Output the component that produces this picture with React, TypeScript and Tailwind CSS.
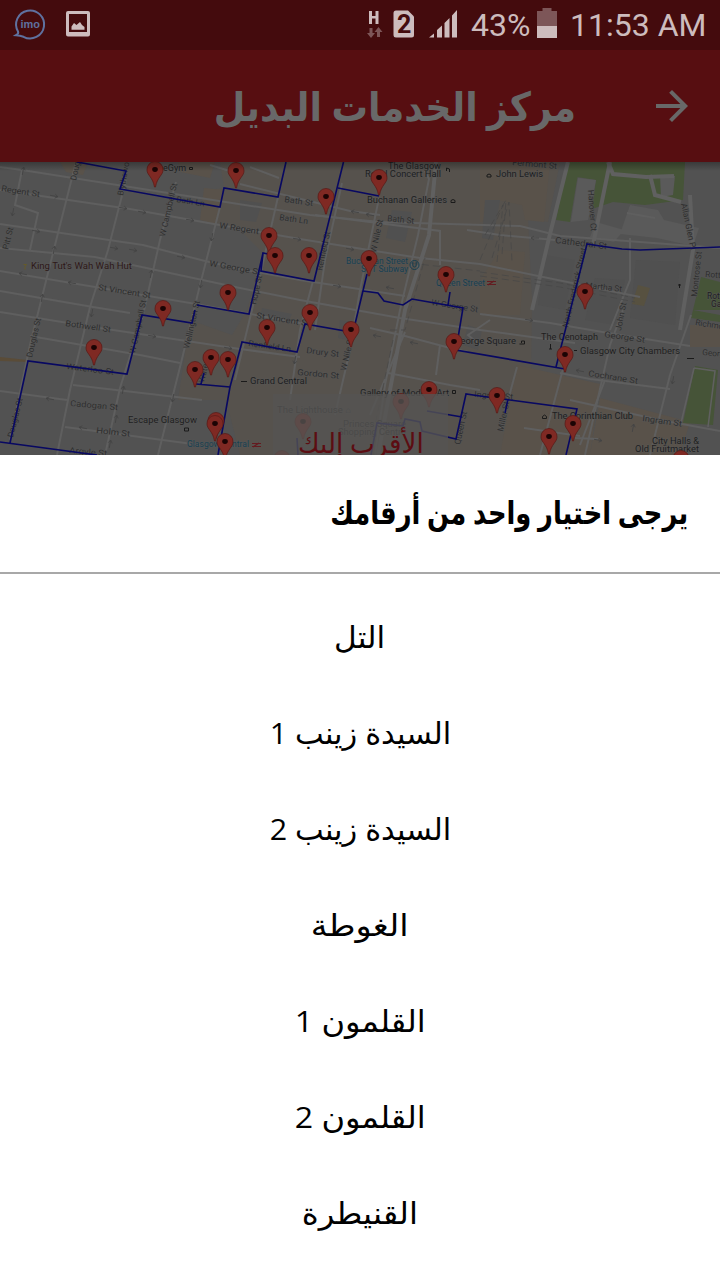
type Label = { t: string; x: number; y: number; r?: number; s?: number; c?: string; w?: number };

const options = [
  { label: 'التل', fit: 'scale-x-[1.04]' },
  { label: 'السيدة زينب 1', fit: 'scale-x-[1.015]' },
  { label: 'السيدة زينب 2', fit: 'scale-x-[1.015]' },
  { label: 'الغوطة', fit: 'scale-x-[1.12]' },
  { label: 'القلمون 1', fit: 'scale-x-[1.07]' },
  { label: 'القلمون 2', fit: 'scale-x-[1.07]' },
  { label: 'القنيطرة', fit: 'scale-x-[1.08]' },
];

const roads = [
  'M0 167L22 170L200 198L310 215L380 222L520 226L560 236L720 248',
  'M0 190L130 209L214 224L300 239L375 251L420 258L480 264L640 297',
  'M0 224L143 245L205 261L240 269L300 280L405 296',
  'M0 248L95 257L240 288L300 300L400 318L480 330L575 343',
  'M0 271L95 287L190 303L310 325',
  'M0 291L93 307L130 313',
  'M0 312L93 327L180 340L240 349L300 357',
  'M30 336L140 355L180 363',
  'M0 391L67 400M73 385L202 400M65 427L200 445',
  'M76 162L55 245L30 345L10 440M126 180L108 250L90 307L70 390L57 455',
  'M176 182L160 240L143 315L120 388L105 455',
  'M220 207L200 285L181 363L158 455M278 197L258 285L235 380',
  'M313 281L300 330L290 400M342 183L325 260L315 330M379 198L360 290L350 350L335 415',
  'M425 171L429 179L418 235L400 310L385 385L375 455',
  'M405 332L370 415M370 328L405 336L450 348L468 352M388 373L450 385L480 390',
  'M440 345L436 375M517 367L500 430M563 369L540 455',
  'M623 310L610 345L585 455M691 315L670 375L650 455',
  'M480 314L550 323L620 335L690 346M560 373L590 379L670 389',
  'M570 400L660 420L720 431M524 428L580 436M575 438L598 439',
  'M605 380L580 445M467 230L500 235L555 240',
  'M22 170L15 205L38 213L30 250M210 165L240 174M250 167L279 178',
  'M240 184L350 211L380 215M315 215L440 231L440 265',
  'M655 218L627 213M630 238L630 280L610 330M480 345L468 335L490 320',
];
const wideRoads = ['M568 162L549 238L532 310', 'M436 162L429 235L405 310L390 390L378 455', 'M608 162L613 174L646 177L674 176', 'M610 162L593 245', 'M690 195L693 250L680 330', 'M650 175L655 195L681 202'];
const arrows: Array<[number, number, number]> = [[54,196,10],[123,208,10],[142,212,10],[190,220,10],[36,231,10],[114,248,10],[133,250,10],[181,257,10],[23,274,190],[72,283,190],[355,212,190],[370,215,190],[337,286,10],[390,288,190],[297,239,10],[350,249,10],[535,238,180],[152,336,10],[228,348,10],[50,399,190],[83,428,190],[414,343,190],[377,336,190],[529,320,10],[580,371,190],[598,440,10],[23,171,280],[13,212,100],[54,250,280],[42,298,280],[151,274,280],[212,237,100],[201,284,100],[92,313,100],[123,390,280],[116,419,280],[173,398,100],[110,444,280],[295,360,100],[673,380,100],[633,428,280]];
const routes = [
  'M77 162L126 171L120 189L220 207L224 188L278 197L286 162',
  'M343.5 162L314 281L261 271L263 253L268 254M338 188L379 196M263 253L249 314L197 305M195 310L192 323L142 315L127 374L28 361L10 443M0 442L97 455',
  'M367 274L350 345M351 332L305 324L297 352L242 342L230 387L218 455M230 387L196 384M204 373L201 384',
  'M363 291L378 293L384 301L403 305L412 299L463 308L456 350L565 369M448 305L450 292',
  'M556 367L587 244L600 246L622 249L640 250L720 247',
  'M480 396L466 394L456 439L422 431L420 422L405 419L403 426L377 423L371 455M462 417L427 411M297 438L298 455',
  'M480 396L577 409L566 455M508 399L505 413',
];
const pinsBelow: Array<[number, number]> = [[429,390],[401,402],[303,422],[282,459]];
const pins: Array<[number, number]> = [[155,170],[236,171],[326,197],[379,178],[269,236],[275,256],[309,256],[369,259],[446,275],[585,292],[228,293],[163,309],[310,313],[267,328],[351,330],[454,342],[565,355],[94,348],[195,370],[211,358],[228,360],[497,396],[216,421],[215,424],[225,442],[573,424],[549,437],[681,459]];

const labels: Label[] = [
  { t: 'Regent St', x: 1, y: 191, r: 9, w: 39 }, { t: 'King Tut\'s Wah Wah Hut', x: 31, y: 269, w: 101, c: '#2d1717' },
  { t: 'Pitt St', x: 8, y: 250, r: -76 }, { t: 'Douglas St', x: 76, y: 181, r: -78 }, { t: 'Blythswood', x: 123, y: 196, r: -79 },
  { t: 'eGym', x: 163, y: 171, w: 23 }, { t: 'W Campbell St', x: 165, y: 237, r: -77 }, { t: 'Bath Ln', x: 176, y: 202, r: 9 },
  { t: 'W Regent', x: 219, y: 228, r: 9, w: 40 }, { t: 'W George St', x: 209, y: 266, r: 10, w: 52 }, { t: 'St Vincent St', x: 98, y: 290, r: 9, w: 53 },
  { t: 'Bath St', x: 284, y: 202, r: 8, w: 29 }, { t: 'Bath Ln', x: 279, y: 220, r: 8, w: 29 }, { t: 'Bath St', x: 387, y: 221, r: 6, w: 27 },
  { t: 'The Glasgow', x: 388, y: 169, w: 53 }, { t: 'Royal Concert Hall', x: 365, y: 177, w: 76 }, { t: 'Buchanan Galleries', x: 367, y: 203, w: 80 },
  { t: 'W Nile St', x: 376, y: 253, r: -78 }, { t: 'Renfield St', x: 322, y: 271, r: -78 }, { t: 'Hope St', x: 256, y: 305, r: -78 },
  { t: 'Buchanan Street', x: 346, y: 264, w: 62, c: '#173f50' }, { t: 'SPT Subway', x: 361, y: 272, w: 47, c: '#173f50' },
  { t: 'Queen Street', x: 436, y: 286, w: 49, c: '#173f50' }, { t: 'John Lewis', x: 496, y: 177, w: 47 }, { t: 'Fermont St', x: 512, y: 165, r: 5, w: 45 },
  { t: 'Hanover Ct', x: 588, y: 190, r: 86 }, { t: 'Cathedral St', x: 555, y: 243, r: 7, w: 52, s: 9 }, { t: 'Allan Glen Pl', x: 681, y: 204, r: 78 },
  { t: 'Montrose St', x: 697, y: 297, r: -84 }, { t: 'Martha St', x: 585, y: 288, r: 6, w: 37 }, { t: 'North Frederick Street', x: 568, y: 328, r: -77 },
  { t: 'Rottenrow', x: 705, y: 277, r: 4 }, { t: 'Rottenrow', x: 707, y: 299 }, { t: 'Gardens', x: 711, y: 307 }, { t: 'W George St', x: 431, y: 305, r: 9, w: 47 },
  { t: 'Bothwell St', x: 65, y: 326, r: 8, w: 46 }, { t: 'Douglas St', x: 32, y: 358, r: -77 }, { t: 'Wellington St', x: 189, y: 349, r: -77 },
  { t: 'W Campbell St', x: 135, y: 354, r: -78 }, { t: 'Waterloo St', x: 66, y: 369, r: 7, w: 48 }, { t: 'Douglas St', x: 13, y: 438, r: -76 },
  { t: 'Cadogan St', x: 70, y: 406, r: 5, w: 48 }, { t: 'Holm St', x: 96, y: 433, r: 6, w: 34 }, { t: 'Argyle St', x: 69, y: 453, r: 5, w: 38 },
  { t: 'Escape Glasgow', x: 128, y: 423, w: 69 }, { t: 'Glasgow Central', x: 187, y: 447, w: 62, c: '#173f50' }, { t: 'Waterloo', x: 204, y: 383, r: -77 },
  { t: 'St Vincent St', x: 256, y: 318, r: 9, w: 54 }, { t: 'Renfield Ln', x: 248, y: 346, r: 8, w: 43 }, { t: 'Drury St', x: 306, y: 353, r: 7, w: 33 },
  { t: 'Gordon St', x: 297, y: 375, r: 5, w: 42 }, { t: 'W Nile St', x: 346, y: 371, r: -77 }, { t: 'Grand Central', x: 250, y: 384, w: 57 },
  { t: 'Gallery of Modern Art', x: 360, y: 396, w: 89 }, { t: 'The Lighthouse ⌂', x: 277, y: 413, w: 74 }, { t: 'Princes Square', x: 343, y: 427, w: 63 },
  { t: 'Shopping Centre', x: 338, y: 435, w: 68 }, { t: 'George Square', x: 454, y: 344, w: 62 }, { t: 'Queen St', x: 460, y: 445, r: -78 },
  { t: 'Miller St', x: 503, y: 432, r: -78 }, { t: 'Ingram St', x: 474, y: 397, r: 4, w: 39 }, { t: 'The Cenotaph', x: 541, y: 340, w: 57 },
  { t: 'Glasgow City Chambers', x: 580, y: 354, w: 100 }, { t: 'George St', x: 604, y: 337, r: 8, w: 41 }, { t: 'John St', x: 621, y: 331, r: -79 },
  { t: 'Richmond', x: 695, y: 325, r: 9 }, { t: 'George St', x: 702, y: 355, r: 5 }, { t: 'Cochrane St', x: 588, y: 376, r: 9, w: 50 },
  { t: 'The Corinthian Club', x: 552, y: 419, w: 81 }, { t: 'Ingram St', x: 642, y: 421, r: 8, w: 40 }, { t: 'City Halls &', x: 652, y: 444, w: 47 }, { t: 'Old Fruitmarket', x: 635, y: 452, w: 64 },
];

function Pin({ at }: { at: [number, number] }) {
  return (
    <g transform={`translate(${at[0]} ${at[1]})`}>
      <path d="M0-8.500A8 8 0 0 0-8 0C-8 5-2 7.500-.5 17H.5C2 7.500 8 5 8 0A8 8 0 0 0 0-8.500Z" fill="#7f2923" stroke="#5b1c18" strokeWidth=".8" />
      <ellipse cy="-.5" rx="2.800" ry="2.400" fill="#1b0404" />
    </g>
  );
}

function StreetMap() {
  return (
    <svg className="block h-full w-full" viewBox="0 162 720 293" fontFamily="Roboto, 'Liberation Sans', sans-serif">
      <defs>
        <linearGradient id="shade" x2="0" y2="1"><stop stopColor="#000" stopOpacity=".3" /><stop offset="1" stopColor="#000" stopOpacity="0" /></linearGradient>
      </defs>
      <path fill="#525252" d="M0 162H720V455H0Z" />
      <path fill="#56524d" d="M220 162H560L548 222L528 218L532 300L530 455H240L226 400L178 400L190 320L232 335L247 310L263 253L240 230L225 225L203 220L209 190L224 188Z" />
      <path fill="#59524a" d="M480 162H550L544 222L525 220L522 205L497 200L482 222H480ZM204 188L224 190L215 224L200 220ZM60 162H88L83 175L66 172ZM178 162H215L210 178L180 172ZM500 250L525 252L520 315H480V280ZM517 365L600 384L590 455H500ZM600 398L690 422L680 455H590ZM690 325H720V347H690Z" />
      <path fill="#505050" d="M240 200L262 203L256 222L240 220ZM392 210L412 212L405 242L386 238ZM545 255L575 260L565 310L538 305ZM595 278L625 280L615 325L585 320ZM636 260L680 262L675 325L630 318ZM468 325L482 330L478 350L463 345ZM485 200L500 200L493 240L482 238ZM340 320L352 322L347 340L338 338ZM262 308L292 314L288 322L260 318Z" />
      <path fill="#465438" d="M568 162H580L570 222L556 220ZM580 162H685L683 200L645 205L613 202L592 209L596 180L577 177ZM701 277L720 282V310H693ZM693 310L720 315V322L691 318ZM695 366L718 370L713 425L683 423Z" />
      <path fill="#5a5a5a" d="M630 205L658 210L664 220L699 228L693 246L657 238L620 234ZM596 222L624 230L614 242L590 237ZM660 175L675 176L673 195L661 197ZM578 178L596 180L588 220L571 222Z" />
      <path fill="#575140" d="M638 285L650 288L644 306L632 304Z" />
      <path fill="#5a4c38" d="M0 357L28 360V362L0 361Z" />
      <g fill="none" stroke="#5f5f5f" strokeWidth="2">{roads.map((d) => <path key={d} d={d} />)}</g>
      <g fill="none" stroke="#606060" strokeWidth="4">{wideRoads.map((d) => <path key={d} d={d} />)}</g>
      <path fill="none" stroke="#606060" strokeWidth="1.600" d="M694 368L715 371L708 427M694 368L681 423" />
      <path fill="none" stroke="#464646" strokeWidth=".7" strokeDasharray="7 4" d="M485 235L506 200L502 255M492 258L509 202L512 262M480 260L503 205L497 262M480 272L560 283L635 298M480 276L560 287L635 302M400 262L480 271M390 330L405 330L425 258M393 340L375 425" />
      <g fill="none" stroke="#454545" strokeWidth=".9">
        {arrows.map(([x, y, r], i) => <path key={i} transform={`translate(${x} ${y}) rotate(${r})`} d="M-4 0H4M1-2L4 0L1 2" />)}
      </g>
      {labels.map((l, i) => (
        <text key={i} transform={`translate(${l.x} ${l.y}) rotate(${l.r ?? 0})`} fontSize={l.s ?? 8.4} fill={l.c ?? (l.r ? '#2e2e2e' : '#1e1e1e')} stroke="#575757" strokeWidth=".8" paintOrder="stroke" textLength={l.w} lengthAdjust="spacingAndGlyphs">{l.t}</text>
      ))}
      <g fill="none" stroke="#1a1a1a" strokeWidth="1">
        <path d="M189.500 167.500h3v2h-3zM446.500 171v-3l3 1v3M451 202.500h4v-2l-2-1l-2 1zM487 177h4v-2l-2-1l-2 1zM519.500 344h5v-3h-3v2M550.500 344v5m-1.500 0h3M542.500 418.500h4v-2l-2-1.500l-2 1.500zM184.500 431h4v-3h-4zM241 381.500h6M687 358.500h7M452.500 393.500h3v-3h-3zM679.500 284v4m-1.500-3h3M574 350.500h3" />
      </g>
      <path d="M23.500 264.500h3l-1.500 2v3" stroke="#665b28" fill="none" />
      <circle cx="414.500" cy="265" r="4.500" fill="none" stroke="#173f50" />
      <path d="M412.800 262v3q0 2 1.700 2t1.700-2v-3" fill="none" stroke="#173f50" />
      <path d="M487 281.500h9M487 284.500h9M488 285l6-4M252 443.500h9M252 446.500h9M253 447l6-4" stroke="#641b20" strokeWidth="1.200" />
      <g fill="none" stroke="#080862" strokeWidth="1.600">{routes.map((d) => <path key={d} d={d} />)}</g>
      {pinsBelow.map((p, i) => <Pin key={i} at={p} />)}
      <path d="M273 394H448V455H273Z" fill="#555453" opacity=".8" />
      {pins.map((p, i) => <Pin key={i} at={p} />)}
      <path d="M0 162H720V171H0Z" fill="url(#shade)" />
    </svg>
  );
}

function StatusBar() {
  return (
    <div className="flex h-[50px] items-center justify-between bg-[#440b0d] text-[#cdbcbd]">
      <svg className="h-[50px] w-[100px]" viewBox="0 0 100 50">
        <path d="M18 31.500A14 14 0 1 1 23.500 36.800Q20 35.500 16 35.200Q19 33.500 18 31.500Z" fill="none" stroke="#5f719f" strokeWidth="2" />
        <text x="20.500" y="28" fontSize="11" fontWeight="bold" fontFamily="Liberation Sans, sans-serif" fill="#5f719f" textLength="19.500" lengthAdjust="spacingAndGlyphs">imo</text>
        <path fillRule="evenodd" d="M68 11H88Q90 11 90 13V34.500Q90 36.500 88 36.500H68Q66 36.500 66 34.500V13Q66 11 68 11ZM69 14V32H87V14Z" fill="#cdbcbd" />
        <path d="M71.500 29.800V26.500L74 23L76.500 25L80 22L82 25L84.500 27V29.800Z" fill="#cdbcbd" />
      </svg>
      <div className="flex h-[50px] items-center">
        <svg className="h-[50px] w-[110px]" viewBox="360 0 110 50">
          <path d="M369 11H372V16H375.500V11H378.500V24H375.500V18.500H372V24H369Z" fill="#cdbcbd" />
          <path d="M369.500 28H372.500V33H375L371 38L367 33H369.500ZM377 37V32H374.500L378.500 27L382.500 32H380V37Z" fill="#7d5658" />
          <path d="M396 10.500H408L414 16.500V35Q414 37.500 411.500 37.500H396Q393.500 37.500 393.500 35V13Q393.500 10.500 396 10.500Z" fill="#cdbcbd" />
          <text x="397" y="33" fontSize="25" fontWeight="bold" fontFamily="Roboto, sans-serif" fill="#440b0d">2</text>
          <path d="M429 37.500L434 33.500V37.500ZM437 30L442 25.500V37.500H437ZM444.500 23L449.500 18V37.500H444.500ZM452 15.500L457 10V37.500H452Z" fill="#cdbcbd" />
        </svg>
        <span className="w-[67px] whitespace-nowrap pl-px font-[Roboto] text-[32px] leading-[50px] font-normal">43%</span>
        <svg className="h-[50px] w-[20px]" viewBox="537 0 20 50">
          <path d="M537 11H542.500V8H551.500V11H557V26H537Z" fill="#7d5658" /><path d="M537 26H557V38H537Z" fill="#cdbcbd" />
        </svg>
        <span className="w-[149px] whitespace-nowrap pl-[13px] font-[Roboto] text-[32px] leading-[50px] font-normal">11:53 AM</span>
        <span className="w-[14px]" />
      </div>
    </div>
  );
}

export default function App() {
  return (
    <main className="flex h-[1280px] w-[720px] flex-col overflow-hidden bg-white">
      <StatusBar />
      <header dir="rtl" className="flex h-[112px] shrink-0 items-center bg-[#570e11] pr-6 text-[#686868]">
        <svg className="h-12 w-12" viewBox="0 0 24 24" fill="currentColor"><path d="M12 4l-1.410 1.410L16.170 11H4v2h12.170l-5.580 5.590L12 20l8-8z" /></svg>
        <h1 className="mr-[72px] origin-right scale-x-[0.91] whitespace-nowrap font-['Open_Sans','DejaVu_Sans',sans-serif] text-[40px] leading-[60px] font-bold">مركز الخدمات البديل</h1>
      </header>
      <section className="relative h-[293px] shrink-0 overflow-hidden">
        <StreetMap />
        <div dir="rtl" className="absolute top-[261px] left-[273px] flex h-10 w-[175px] justify-center whitespace-nowrap font-['Open_Sans','DejaVu_Sans',sans-serif] text-[27px] leading-10 text-[#5c0d12]"><span className="scale-x-[0.97]">الأقرب إليك</span></div>
      </section>
      <section dir="rtl" className="flex h-[825px] flex-col bg-white font-['Open_Sans','DejaVu_Sans',sans-serif] text-black">
        <h2 className="flex h-[119px] items-center border-b-2 border-[#a8a8a8] pr-8 pb-1 text-[32px] font-bold"><span className="origin-right scale-x-[0.806] whitespace-nowrap">يرجى اختيار واحد من أرقامك</span></h2>
        <ul className="flex flex-col pt-[14px]">
          {options.map((o) => (
            <li key={o.label} className="flex h-24 items-center justify-center text-[30px]"><span className={`inline-block whitespace-nowrap ${o.fit}`}>{o.label}</span></li>
          ))}
        </ul>
      </section>
    </main>
  );
}
